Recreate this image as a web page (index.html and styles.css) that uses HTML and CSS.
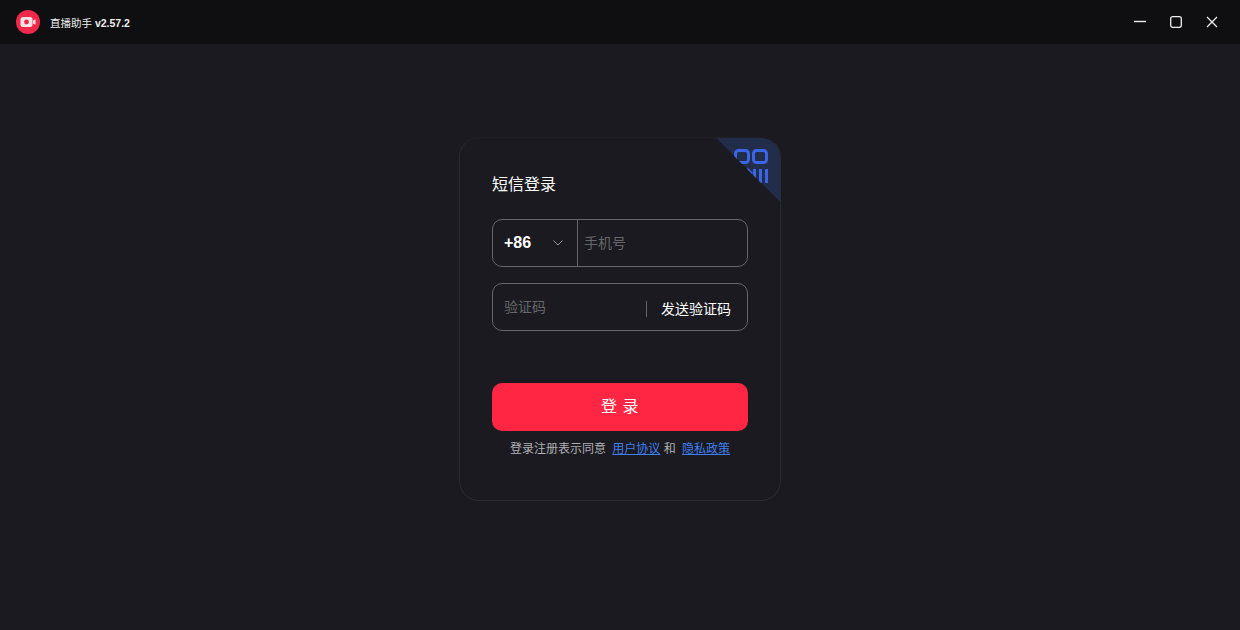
FILE: index.html
```html
<!DOCTYPE html>
<html lang="zh-CN">

<head>
    <meta charset="UTF-8">
    <title>直播助手</title>
    <link rel="stylesheet" href="styles.css">
</head>

<body>
    <div class="titlebar">
        <div class="app-name">
            <svg class="app-logo" width="24" height="24" viewBox="0 0 24 24">
                <circle cx="12" cy="12" r="12" fill="#f0284a" />
                <rect x="4.500" y="7" width="12" height="10" rx="2.500" fill="#fbe3e6" />
                <circle cx="10.500" cy="12" r="2.400" fill="#f0284a" />
                <path d="M17 10.600l2.500-1.400v5.600l-2.500-1.400z" fill="#fbe3e6" />
            </svg>
            <span class="app-title">直播助手 <b>v2.57.2</b></span>
        </div>
        <div class="win-btns">
            <svg width="12" height="12" viewBox="0 0 12 12">
                <path d="M0 5.500h12" stroke="#eee" stroke-width="1.400" fill="none" />
            </svg>
            <svg width="12" height="12" viewBox="0 0 12 12">
                <rect x="0.700" y="0.700" width="10.600" height="10.600" rx="2" stroke="#eee" stroke-width="1.300" fill="none" />
            </svg>
            <svg width="12" height="12" viewBox="0 0 12 12">
                <path d="M1 1l10 10M11 1L1 11" stroke="#eee" stroke-width="1.300" fill="none" />
            </svg>
        </div>
    </div>

    <div class="main">
        <div class="card">
            <div class="corner">
                <svg width="64" height="64" viewBox="0 0 64 64">
                    <path d="M0 0H64V64z" fill="#222c4b" />
                    <g fill="none" stroke="#3a66e6" stroke-width="3">
                        <rect x="19.500" y="12.500" width="13" height="12" rx="3" />
                        <rect x="37.500" y="12.500" width="13" height="12" rx="3" />
                        <path d="M31 31l5 5M38.500 31v14M44.500 31v14M50.500 31v14" />
                    </g>
                    <path d="M0 0L64 64H0z" fill="#1a1a20" />
                </svg>
            </div>
            <h2 class="card-title">短信登录</h2>
            <div class="field">
                <div class="area-code">
                    <span>+86</span>
                    <svg width="10" height="6" viewBox="0 0 10 6">
                        <path d="M0.500 0.500L5 5l4.500-4.500" stroke="#999" fill="none" />
                    </svg>
                </div>
                <span class="placeholder">手机号</span>
            </div>
            <div class="field code-field">
                <span class="placeholder">验证码</span>
                <span class="send-code">发送验证码</span>
            </div>
            <button class="login-btn">登 录</button>
            <p class="agreement">登录注册表示同意 <a href="#">用户协议</a> 和 <a href="#">隐私政策</a></p>
        </div>
    </div>
</body>

</html>
```

FILE: styles.css
```css
body {
    display: flex;
    flex-direction: column;
    height: 100vh;
    margin: 0;
    overflow: hidden;
    font-family: "Liberation Sans", "Noto Sans CJK SC", sans-serif;
    background-color: #1a1a20;
    color: #fff;
}

.titlebar {
    display: flex;
    justify-content: space-between;
    align-items: center;
    flex: 0 0 44px;
    padding: 0 22px 0 16px;
    background-color: #0f0f11;
}

.app-name {
    display: flex;
    align-items: center;
}

.app-logo {
    margin-right: 10px;
}

.app-title {
    font-size: 10.500px;
    color: #eee;
}

.win-btns {
    display: flex;
    gap: 24px;
}

.main {
    display: flex;
    justify-content: center;
    padding-top: 93px;
}

.card {
    position: relative;
    box-sizing: border-box;
    width: 322px;
    height: 364px;
    padding: 36px 32px 0;
    border: 1px solid #2a2b31;
    border-top-color: #1f1f25;
    border-radius: 20px;
    overflow: hidden;
}

.corner {
    position: absolute;
    top: 0;
    right: 0;
    width: 64px;
    height: 64px;
}

.card-title {
    margin: 0 0 23px;
    font-size: 16px;
    line-height: 22px;
    font-weight: normal;
}

.field {
    display: flex;
    align-items: center;
    box-sizing: border-box;
    width: 256px;
    height: 48px;
    margin-bottom: 16px;
    border: 1px solid #66676b;
    border-radius: 10px;
    font-size: 14px;
}

.area-code {
    display: flex;
    justify-content: space-between;
    align-items: center;
    box-sizing: border-box;
    width: 85px;
    height: 100%;
    padding: 0 14px 0 11px;
    border-right: 1px solid #66676b;
    font-size: 16px;
    font-weight: bold;
}

.placeholder {
    margin-left: 6px;
    margin-bottom: 2px;
    color: #66676b;
}

.code-field {
    justify-content: space-between;
}

.code-field .placeholder {
    margin-left: 11px;
}

.send-code {
    margin-top: 4px;
    padding-left: 14px;
    margin-right: 16px;
    border-left: 1px solid #66676b;
    line-height: 16px;
}

.login-btn {
    display: block;
    width: 256px;
    height: 48px;
    margin-top: 52px;
    padding: 0 0 4px;
    border: none;
    border-radius: 10px;
    background-color: #fe2643;
    color: #fff;
    font-family: inherit;
    font-size: 16px;
    letter-spacing: 0.500px;
}

.agreement {
    margin: 9px 0 0;
    text-align: center;
    font-size: 12px;
    line-height: 18px;
    color: #b0b0b4;
}

.agreement a {
    margin-left: 3px;
    color: #3f7ff0;
}
```
